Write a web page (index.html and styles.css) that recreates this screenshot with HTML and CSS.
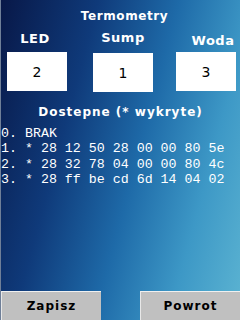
FILE: index.html
```html
<!DOCTYPE html>
<html lang="pl">
<head>
    <meta charset="UTF-8">
    <title>Termometry</title>
    <link rel="stylesheet" href="styles.css">
</head>
<body>
    <div class="screen">
        <h1 class="title">Termometry</h1>

        <div class="sensors">
            <div class="sensor sensor-led">
                <div class="sensor-label">LED</div>
                <div class="sensor-box">2</div>
            </div>
            <div class="sensor sensor-sump">
                <div class="sensor-label">Sump</div>
                <div class="sensor-box">1</div>
            </div>
            <div class="sensor sensor-woda">
                <div class="sensor-label">Woda</div>
                <div class="sensor-box">3</div>
            </div>
        </div>

        <h2 class="subtitle">Dostepne (* wykryte)</h2>

        <!-- lista adresow czujnikow -->
        <ul class="devices">
            <li>0. BRAK</li>
            <li>1. * 28 12 50 28 00 00 80 5e</li>
            <li>2. * 28 32 78 04 00 00 80 4c</li>
            <li>3. * 28 ff be cd 6d 14 04 02</li>
        </ul>

        <div class="buttons">
            <button class="btn">Zapisz</button>
            <button class="btn">Powrot</button>
        </div>
    </div>
</body>
</html>
```

FILE: styles.css
```css
html, body {
    margin: 0;
    padding: 0;
}

.screen {
    width: 240px;
    height: 320px;
    box-sizing: border-box;
    border-left: 1px solid #6f7f98;
    display: flex;
    flex-direction: column;
    color: #fff;
    font-family: "DejaVu Sans", sans-serif;
    background: linear-gradient(105deg, #081848 0%, #0f3a7a 30%, #1e6aa8 55%, #3d98c6 78%, #5cb4d2 100%);
    overflow: hidden;
}

.title {
    margin: 9px 0 0 0;
    font-size: 12px;
    font-weight: bold;
    letter-spacing: 0.6px;
    text-align: center;
    padding-left: 8px;
    line-height: 14px;
}

/* Czujniki */
.sensors {
    display: flex;
    padding-left: 6px;
    margin-top: 7px;
}

.sensor {
    width: 60px;
    display: flex;
    flex-direction: column;
    align-items: center;
}

.sensor-sump {
    margin-left: 26px;
}

.sensor-woda {
    margin-left: 23px;
}

.sensor-label {
    font-size: 13px;
    font-weight: bold;
    letter-spacing: 0.5px;
    line-height: 14px;
    height: 14px;
}

.sensor-led .sensor-label {
    margin: 2px 0 6px -4px;
}

.sensor-sump .sensor-label {
    margin: 1px 0 8px 0;
}

.sensor-woda .sensor-label {
    margin: 4px 0 4px 14px;
}

.sensor-box {
    width: 60px;
    height: 39px;
    background-color: #fff;
    color: #000;
    font-size: 14px;
    display: flex;
    align-items: center;
    justify-content: center;
}

.subtitle {
    margin: 13px 0 0 0;
    font-size: 12px;
    font-weight: bold;
    letter-spacing: 1px;
    text-align: center;
    line-height: 14px;
}

.devices {
    list-style: none;
    margin: 7px 0 0 0;
    padding: 0;
    font-family: "Liberation Mono", monospace;
    font-size: 13.3px;
    line-height: 15.3px;
}

.buttons {
    margin-top: auto;
    display: flex;
    justify-content: space-between;
}

.btn {
    width: 100px;
    height: 29px;
    background-color: #c0c0c0;
    border: none;
    border-top: 1px solid #f0f0f0;
    border-left: 1px solid #e8e8e8;
    font-family: "DejaVu Sans", sans-serif;
    font-size: 12px;
    font-weight: bold;
    letter-spacing: 1px;
    color: #000;
    padding: 0;
}
```
